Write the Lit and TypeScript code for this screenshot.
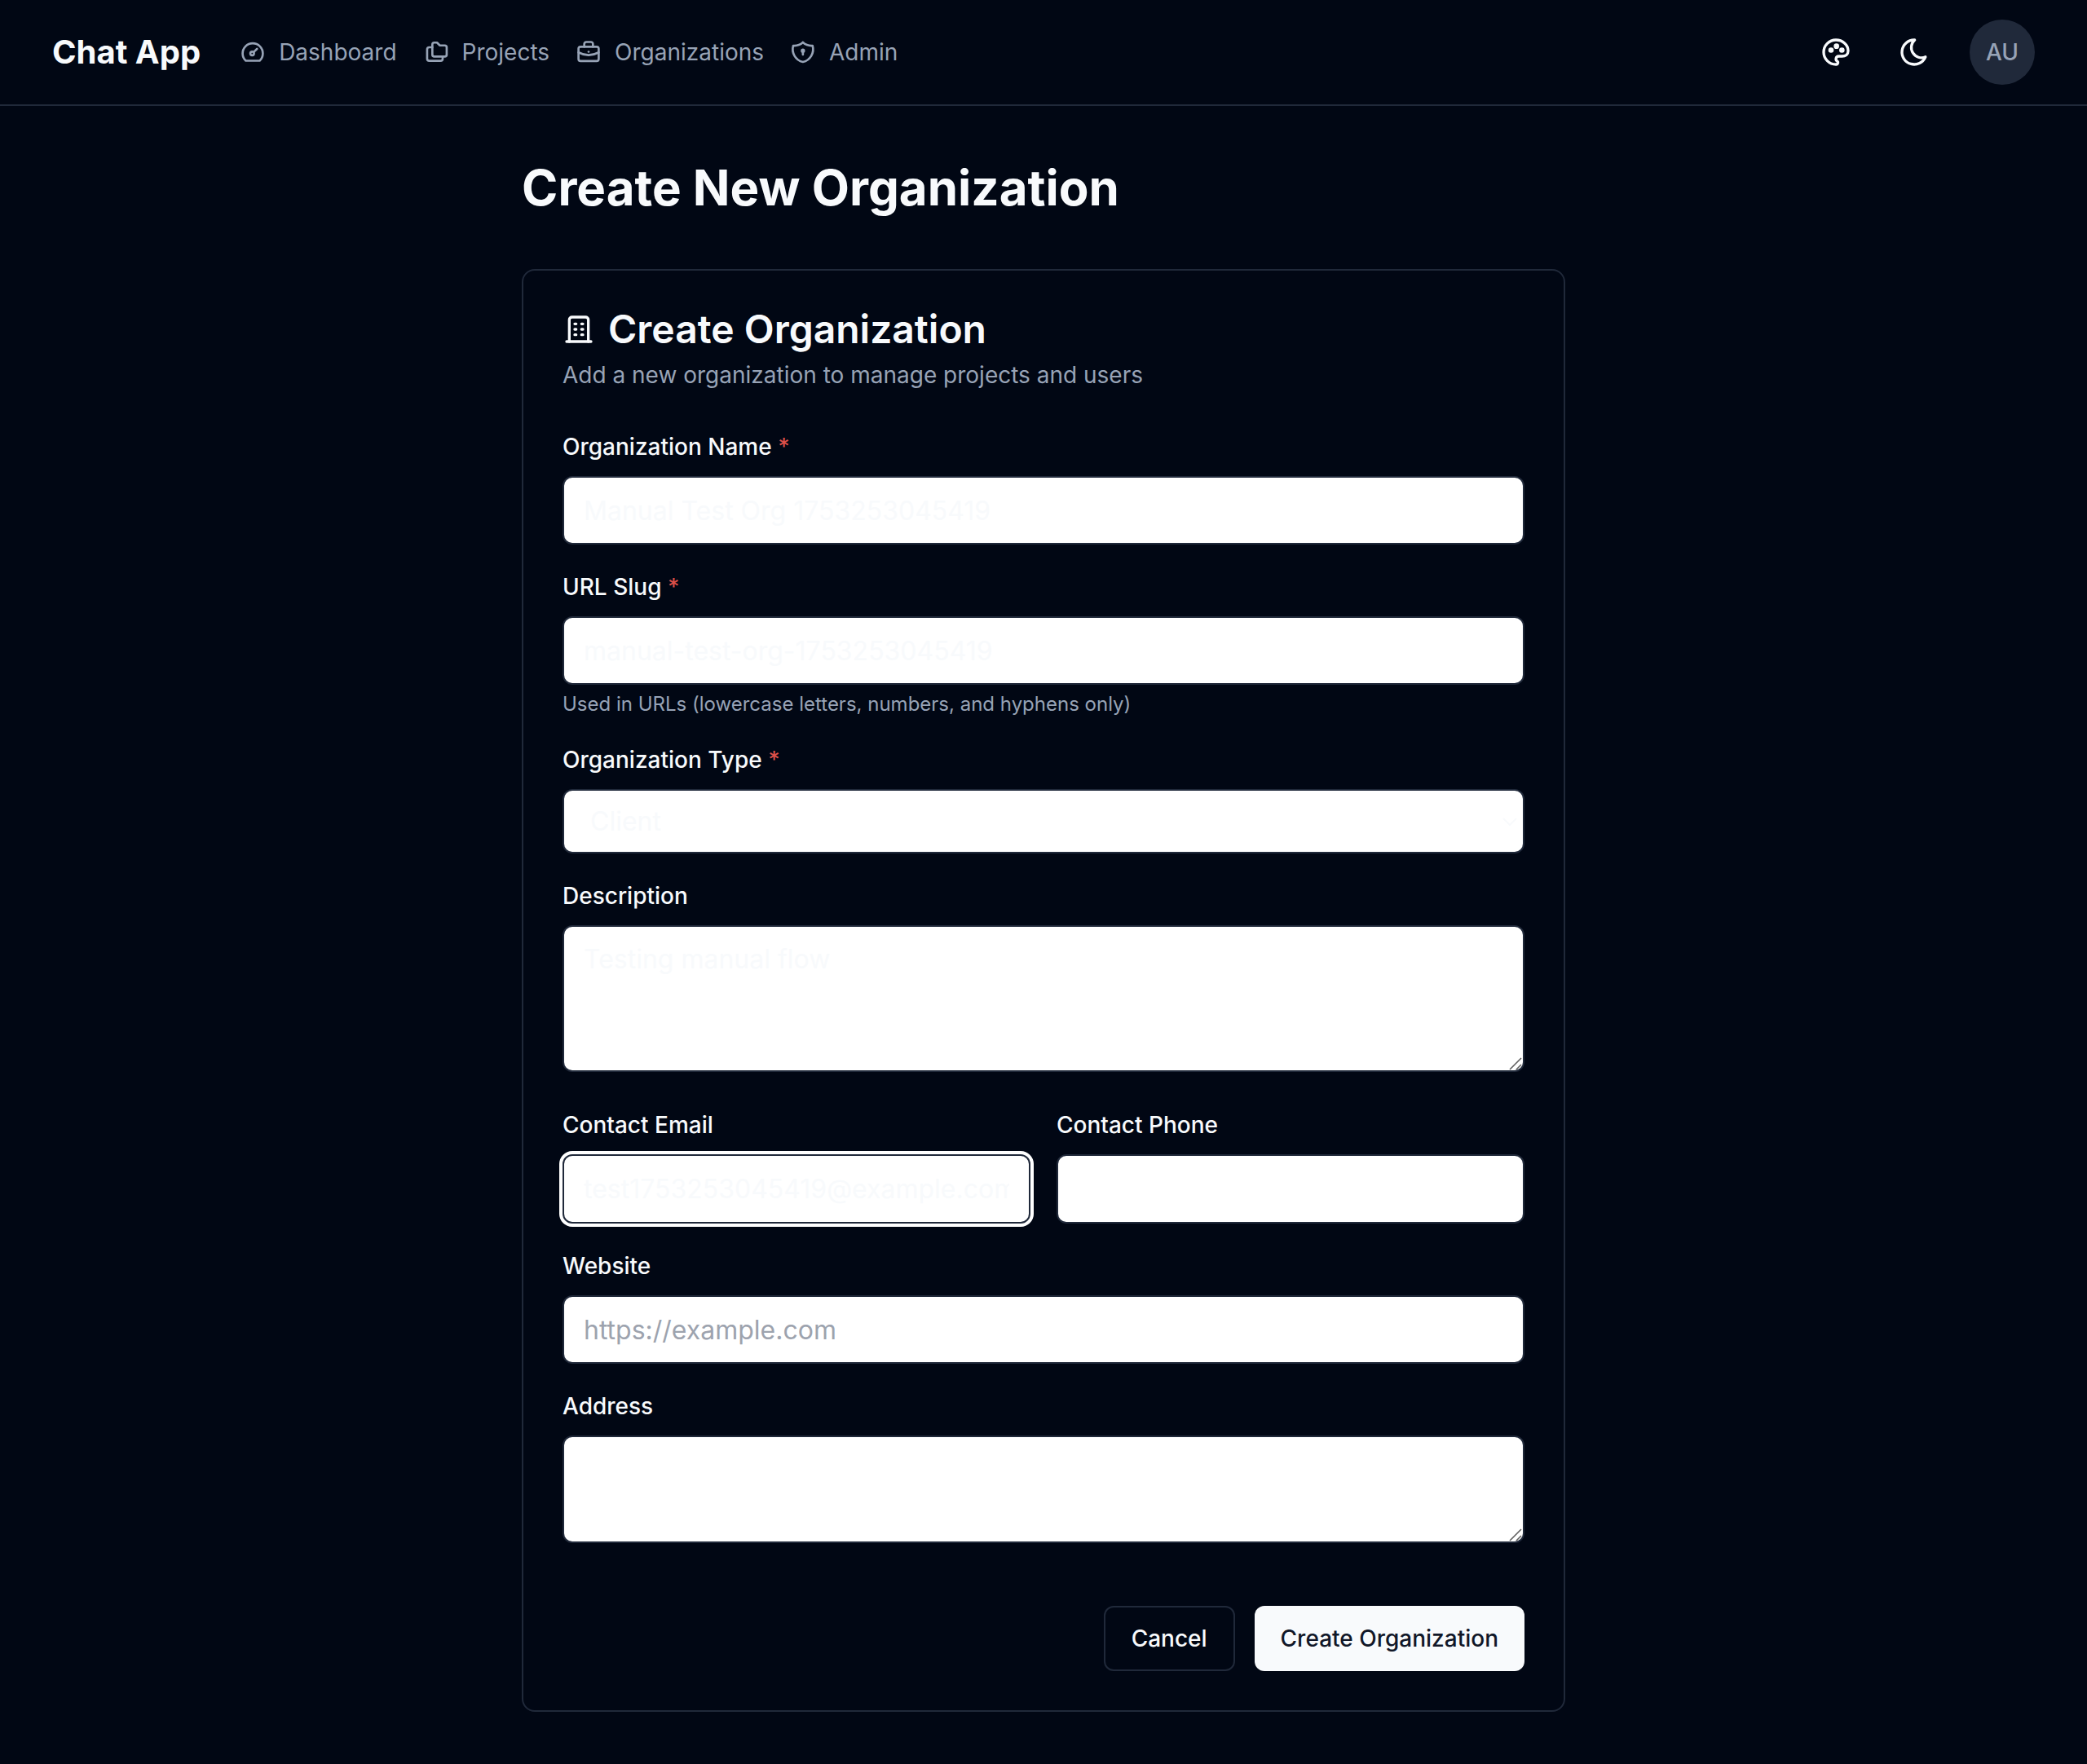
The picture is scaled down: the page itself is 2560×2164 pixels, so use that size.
import { LitElement, html, css, svg, nothing } from "lit";
import { customElement } from "lit/decorators.js";

const icons = {
  gauge: svg`<path d="M5.600 19.900H18.400A9.300 9.300 0 1 0 5.600 19.900z"/><circle cx="11.500" cy="13.200" r="1.700"/><path d="m12.900 11.900 3-2.900"/>`,
  folders: svg`<path d="M10.300 3.200h2.500l2.600 2.600h4.500a1.800 1.800 0 0 1 1.800 1.800v6.600a1.800 1.800 0 0 1-1.800 1.800h-9.600a1.800 1.800 0 0 1-1.800-1.800V5a1.800 1.800 0 0 1 1.800-1.800z"/><path d="M8.500 7.500H5.700a2 2 0 0 0-2 2V18a2 2 0 0 0 2 2H16a2 2 0 0 0 2-2v-2"/>`,
  briefcase: svg`<rect x="2.700" y="7" width="18.600" height="13.100" rx="1.900"/><path d="M8 7V4.500a1.900 1.900 0 0 1 1.900-1.900h4.200A1.900 1.900 0 0 1 16 4.500V7"/><path d="M2.700 12.200Q12 17.300 21.300 12.200"/><path d="M12 11.600v.01"/>`,
  shield: svg`<path d="M11.900 3a12 12 0 0 0 8.900 3A12 12 0 0 1 11.900 21 12 12 0 0 1 3 6a12 12 0 0 0 8.900-3"/><circle cx="11.900" cy="10.700" r="1"/><path d="M11.900 11.500v2.700"/>`,
  palette: svg`<path d="M12 21a9 9 0 0 1 0-18c5 0 9 3.600 9 8a4 4 0 0 1-1.300 3.100c-.9.700-2 .9-3.200.9h-2.500a2 2 0 0 0-1 3.700A1.300 1.300 0 0 1 12 21"/><g fill="currentColor"><circle cx="8.400" cy="10.500" r="1"/><circle cx="12.400" cy="7.600" r="1"/><circle cx="16.400" cy="10.500" r="1"/></g>`,
  moon: svg`<path d="M12 3h.4a7.500 7.500 0 0 0 7.900 12.500A9 9 0 1 1 12 3z"/>`,
  building: svg`<path d="M3 21h18"/><path d="M5 21V5a2 2 0 0 1 2-2h10a2 2 0 0 1 2 2v16"/><path d="M9 8h1M14 8h1M9 12h1M14 12h1M9 16h1M14 16h1"/>`,
};

type IconName = keyof typeof icons;

const icon = (name: IconName, kind: string) =>
  html`<svg class="icon ${kind}" viewBox="0 0 24 24" aria-hidden="true">${icons[name]}</svg>`;

const links: { label: string; icon: IconName }[] = [
  { label: "Dashboard", icon: "gauge" },
  { label: "Projects", icon: "folders" },
  { label: "Organizations", icon: "briefcase" },
  { label: "Admin", icon: "shield" },
];

@customElement("app-header")
export class AppHeader extends LitElement {
  static styles = css`
    :host {
      display: block;
      border-bottom: 2px solid #20293a;
    }
    .bar {
      display: flex;
      align-items: center;
      height: 128px;
      padding: 0 64px;
      gap: 48px;
    }
    .brand {
      font-size: 40px;
      line-height: 56px;
      font-weight: 700;
      color: inherit;
      text-decoration: none;
    }
    .nav {
      display: flex;
      gap: 32px;
      flex: 1;
    }
    .link {
      display: flex;
      align-items: center;
      gap: 16px;
      font-size: 28px;
      line-height: 40px;
      color: #97a3b6;
      text-decoration: none;
    }
    .icon {
      flex: none;
      fill: none;
      stroke: currentColor;
      stroke-width: 2;
      stroke-linecap: round;
      stroke-linejoin: round;
    }
    .small {
      width: 32px;
      height: 32px;
    }
    .medium {
      width: 40px;
      height: 40px;
    }
    .tools {
      display: flex;
      gap: 16px;
    }
    .tool,
    .avatar {
      display: flex;
      align-items: center;
      justify-content: center;
      width: 80px;
      height: 80px;
      padding: 0;
      border: 0;
      background: none;
      color: inherit;
      font: inherit;
    }
    .avatar {
      margin-left: 12px;
      border-radius: 50%;
      background: #20293a;
      color: #97a3b6;
      font-size: 28px;
      font-weight: 500;
    }
  `;

  render() {
    return html`<header class="bar">
      <a class="brand" href="#home">Chat App</a>
      <nav class="nav">
        ${links.map(
          (l) => html`<a class="link" href="#${l.label.toLowerCase()}">${icon(l.icon, "small")}<span>${l.label}</span></a>`,
        )}
      </nav>
      <div class="tools">
        <button class="tool" type="button" aria-label="Color theme">${icon("palette", "medium")}</button>
        <button class="tool" type="button" aria-label="Dark mode">${icon("moon", "medium")}</button>
        <button class="avatar" type="button">AU</button>
      </div>
    </header>`;
  }
}

@customElement("organization-form")
export class OrganizationForm extends LitElement {
  static styles = css`
    :host {
      display: block;
    }
    .card {
      border: 2px solid #20293a;
      border-radius: 16px;
      padding: 48px;
    }
    .head {
      display: grid;
      gap: 12px;
      margin-bottom: 48px;
    }
    .title {
      display: flex;
      align-items: center;
      gap: 16px;
      margin: 0;
      font-size: 48px;
      line-height: 48px;
      font-weight: 600;
    }
    .icon {
      width: 40px;
      height: 40px;
      flex: none;
      fill: none;
      stroke: currentColor;
      stroke-width: 2;
      stroke-linecap: round;
      stroke-linejoin: round;
    }
    .lead {
      margin: 0;
      font-size: 28px;
      line-height: 40px;
      color: #97a3b6;
    }
    .form {
      display: flex;
      flex-direction: column;
      gap: 32px;
    }
    .field {
      display: flex;
      flex-direction: column;
      min-width: 0;
    }
    .label {
      font-size: 28px;
      line-height: 40px;
      font-weight: 500;
      margin-bottom: 16px;
    }
    .star {
      color: #dc5049;
    }
    .control {
      box-sizing: border-box;
      display: block;
      width: 100%;
      min-width: 0;
      margin: 0;
      height: 84px;
      padding: 16px 24px;
      border: 2px solid #20293a;
      border-radius: 12px;
      background: #fff;
      color: #f8fafc;
      font: inherit;
      font-size: 32px;
      line-height: 48px;
      outline: none;
    }
    .control::placeholder {
      color: #9da3ae;
      opacity: 1;
    }
    .current {
      box-shadow: 0 0 0 4px #fff;
    }
    .choice {
      appearance: none;
      height: 79px;
      padding: 0 32px;
    }
    .area {
      height: auto;
      resize: vertical;
    }
    .area::-webkit-resizer {
      background: transparent;
    }
    .over {
      position: relative;
    }
    .tall {
      margin-bottom: 13px;
    }
    .caret {
      position: absolute;
      right: 8px;
      top: 50%;
      margin-top: -6px;
      width: 20px;
      height: 12px;
      fill: none;
      stroke: #f8fafc;
      stroke-width: 2;
      pointer-events: none;
    }
    .grip {
      position: absolute;
      right: 3px;
      bottom: 2px;
      width: 16px;
      height: 16px;
      fill: none;
      stroke: #606060;
      stroke-width: 1.6;
      pointer-events: none;
    }
    .pair {
      display: grid;
      grid-template-columns: 1fr 1fr;
      gap: 32px;
    }
    .pair .control {
      height: 85px;
    }
    .hint {
      margin: 8px 0 0;
      font-size: 24px;
      line-height: 32px;
      color: #97a3b6;
    }
    .actions {
      display: flex;
      justify-content: flex-end;
      gap: 24px;
      padding-top: 32px;
    }
    .button {
      box-sizing: border-box;
      height: 80px;
      padding: 0 32px;
      border: 2px solid #20293a;
      border-radius: 12px;
      background: none;
      color: inherit;
      font: inherit;
      font-size: 28px;
      line-height: 40px;
      font-weight: 500;
    }
    .primary {
      border: 0;
      background: #f8fafc;
      color: #111728;
    }
  `;

  private label(id: string, text: string, required = false) {
    return html`<label class="label" for=${id}
      >${text}${required ? html` <span class="star">*</span>` : nothing}</label
    >`;
  }

  private area(id: string, text: string, rows: number, value = "") {
    return html`<div class="field">
      ${this.label(id, text)}
      <div class="over tall">
        <textarea class="control area" id=${id} rows=${rows} .value=${value}></textarea>
        <svg class="grip" viewBox="0 0 16 16" aria-hidden="true"><path d="M1 15 15 1M9 15l6-6" /></svg>
      </div>
    </div>`;
  }

  render() {
    return html`<section class="card">
      <div class="head">
        <h2 class="title">
          ${icon("building", "mark")}
          <span>Create Organization</span>
        </h2>
        <p class="lead">Add a new organization to manage projects and users</p>
      </div>
      <form class="form">
        <div class="field">
          ${this.label("name", "Organization Name", true)}
          <input class="control" id="name" type="text" .value=${"Manual Test Org 1753253045419"} />
        </div>
        <div class="field">
          ${this.label("slug", "URL Slug", true)}
          <input class="control" id="slug" type="text" .value=${"manual-test-org-1753253045419"} />
          <p class="hint">Used in URLs (lowercase letters, numbers, and hyphens only)</p>
        </div>
        <div class="field">
          ${this.label("type", "Organization Type", true)}
          <div class="over">
            <select class="control choice" id="type">
              <option>Client</option>
            </select>
            <svg class="caret" viewBox="0 0 20 12" aria-hidden="true"><path d="m2 2 8 8 8-8" /></svg>
          </div>
        </div>
        ${this.area("description", "Description", 3, "Testing manual flow")}
        <div class="pair">
          <div class="field">
            ${this.label("email", "Contact Email")}
            <input class="control current" id="email" type="email" .value=${"test1753253045419@example.com"} />
          </div>
          <div class="field">
            ${this.label("phone", "Contact Phone")}
            <input class="control" id="phone" type="tel" />
          </div>
        </div>
        <div class="field">
          ${this.label("website", "Website")}
          <input class="control" id="website" type="url" placeholder="https://example.com" />
        </div>
        ${this.area("address", "Address", 2)}
        <div class="actions">
          <button class="button" type="button">Cancel</button>
          <button class="button primary" type="submit">Create Organization</button>
        </div>
      </form>
    </section>`;
  }
}

@customElement("app-root")
export class AppRoot extends LitElement {
  static styles = css`
    :host {
      display: block;
      min-height: 100vh;
      background: #010714;
      color: #f8fafc;
      font-family: Inter, "Liberation Sans", sans-serif;
    }
    .main {
      box-sizing: border-box;
      max-width: 1408px;
      margin: 0 auto;
      padding: 64px;
    }
    .heading {
      margin: 0 0 64px;
      font-size: 60px;
      line-height: 72px;
      font-weight: 700;
    }
  `;

  render() {
    return html`<app-header></app-header>
      <main class="main">
        <h1 class="heading">Create New Organization</h1>
        <organization-form></organization-form>
      </main>`;
  }
}
